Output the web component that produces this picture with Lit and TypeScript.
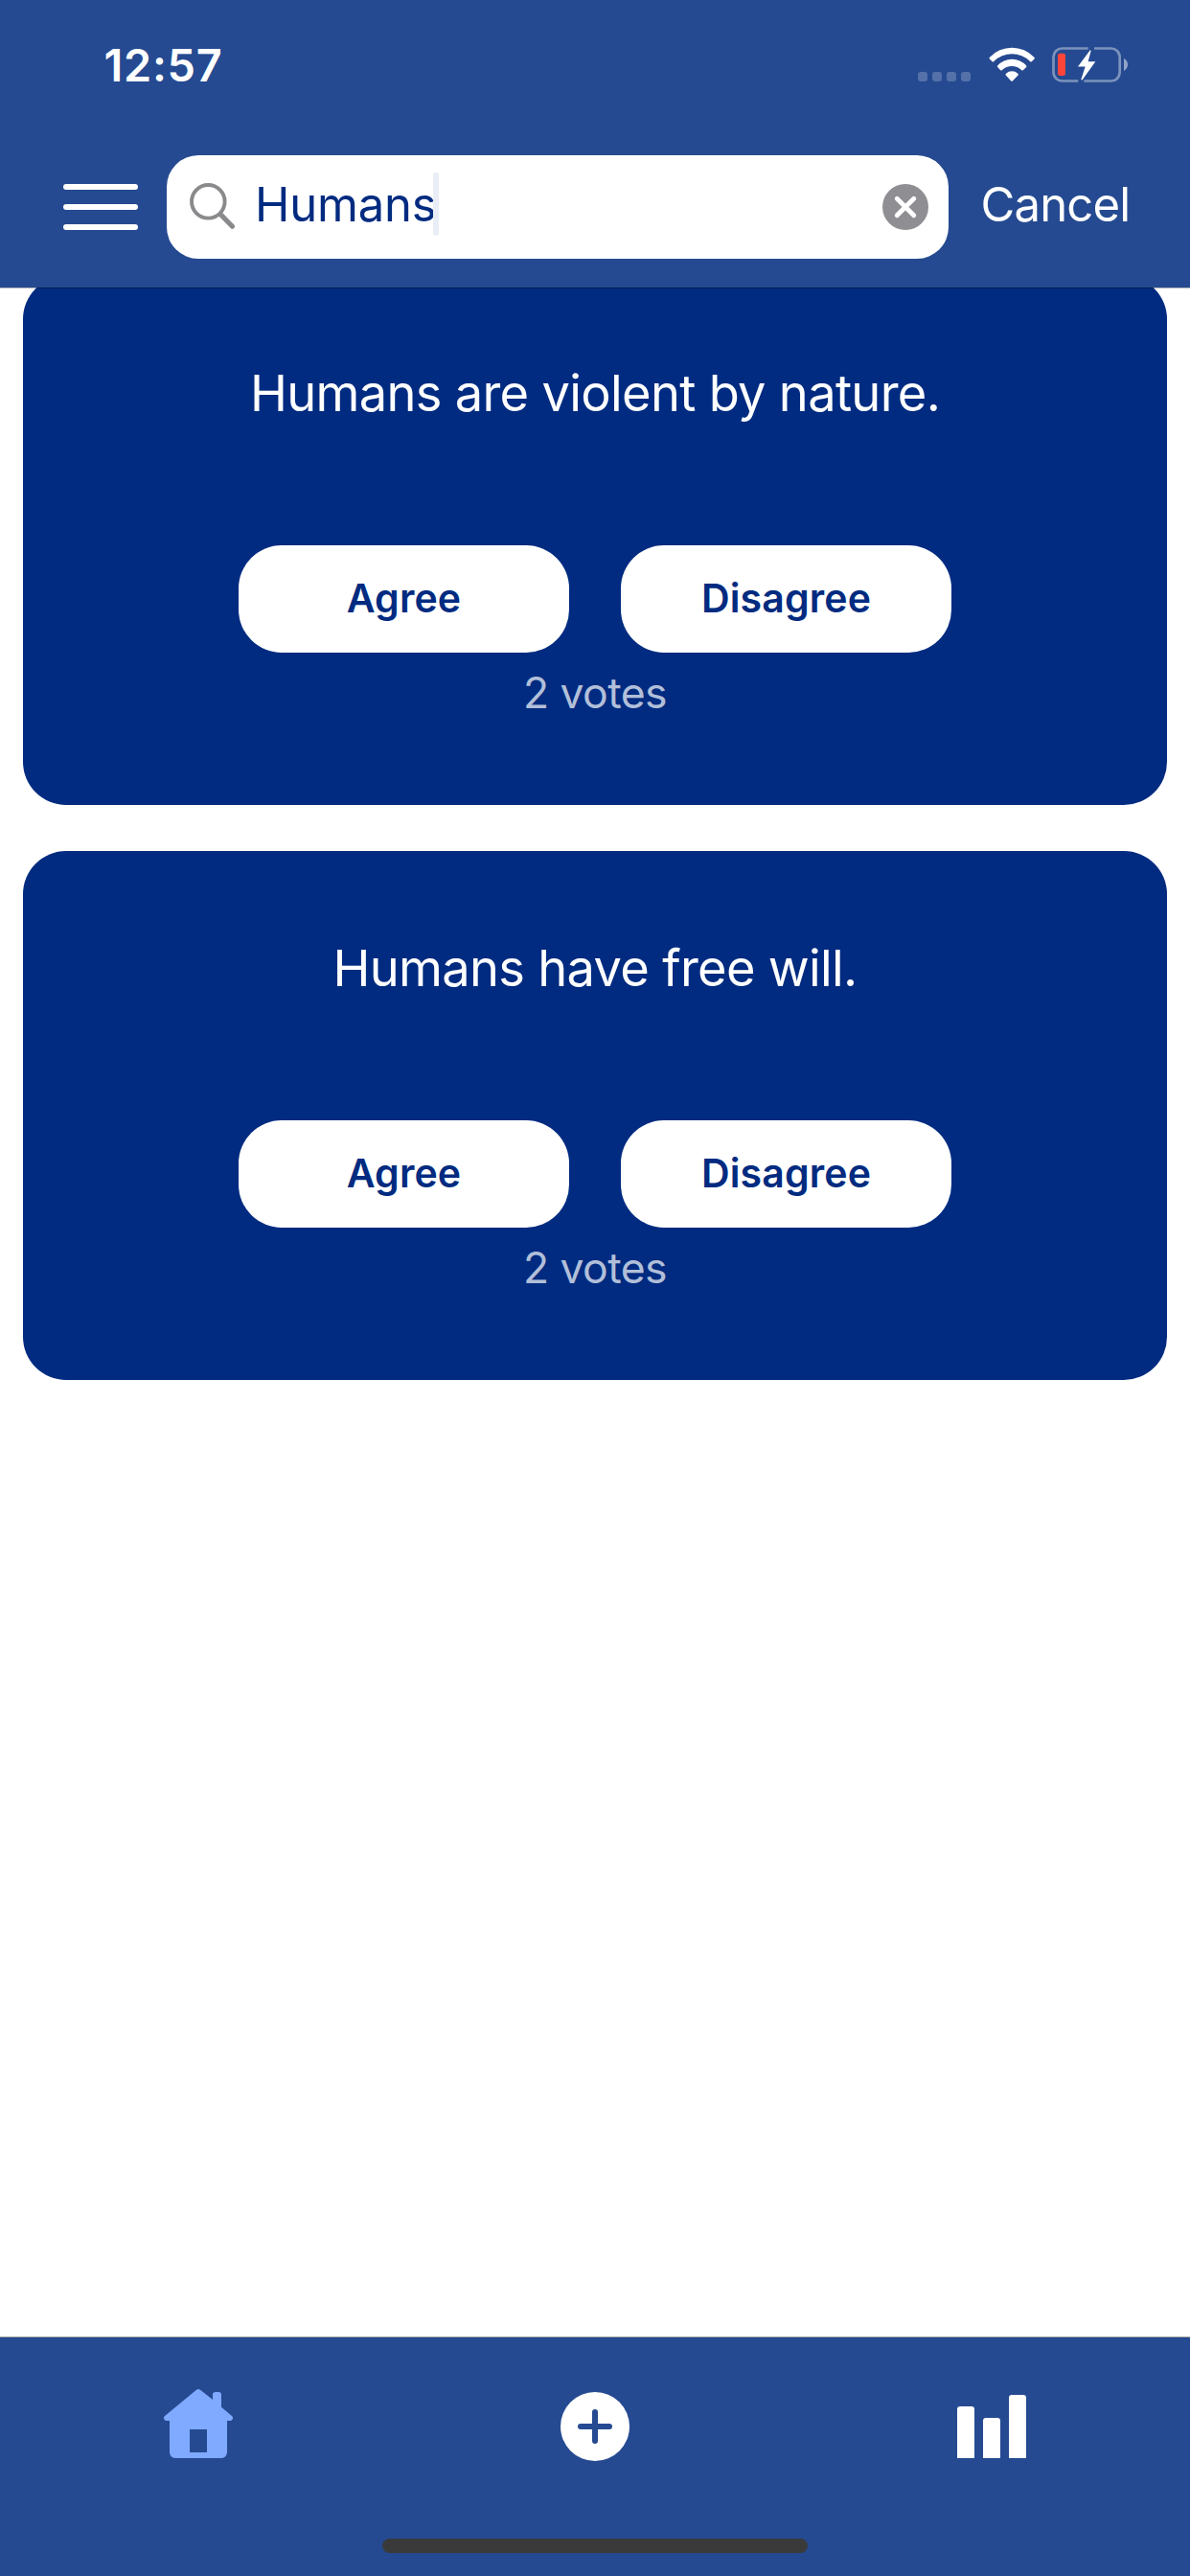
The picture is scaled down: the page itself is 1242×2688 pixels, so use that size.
import { LitElement, html, css } from "lit";
import { customElement, property, state } from "lit/decorators.js";

interface Statement {
  text: string;
  votes: number;
}

@customElement("status-bar")
export class StatusBar extends LitElement {
  static styles = css`
    :host {
      display: flex;
      justify-content: space-between;
      height: 136px;
      padding: 0 65px 0 108.5px;
      box-sizing: border-box;
    }
    .time {
      line-height: 136px;
      font-size: 46.8px;
      font-weight: 600;
      letter-spacing: 0.75px;
    }
    .icons {
      display: flex;
      align-items: flex-start;
      padding-top: 49px;
    }
    .cell {
      display: block;
      width: 55px;
      height: 10px;
      margin: 26px 18.67px 0 0;
    }
    .wifi {
      display: block;
      width: 48px;
      height: 36px;
      margin-right: 18.33px;
    }
    .battery {
      display: block;
      width: 79px;
      height: 37px;
    }
  `;

  render() {
    return html`
      <span class="time">12:57</span>
      <div class="icons">
        <svg class="cell" viewBox="0 0 55 10" fill="#fff" fill-opacity="0.22">
          <rect x="0" width="10" height="10" rx="3" />
          <rect x="15" width="10" height="10" rx="3" />
          <rect x="30" width="10" height="10" rx="3" />
          <rect x="45" width="10" height="10" rx="3" />
        </svg>
        <svg class="wifi" viewBox="574 147 144 108" fill="#fff">
          <path d="M577 179Q574 182 577 185L584 192Q587 195 590 192A81 81 0 0 1 703 192Q706 195 709 192L716 185Q719 182 716 179A96 96 0 0 0 577 179Z" />
          <path d="M602 205Q599 208 602 211L610 219Q613 222 616 219A43 43 0 0 1 676 219Q679 222 682 219L691 211Q694 208 691 205A60 60 0 0 0 602 205Z" />
          <path d="M628 230Q625 233 628 236L643 253Q646 256 649 253L665 236Q668 233 665 230A28 28 0 0 0 628 230Z" />
        </svg>
        <svg class="battery" viewBox="774 147 237 111">
          <g fill="none" stroke="#fff" stroke-opacity="0.4" stroke-width="8">
            <path d="M887 151.500H806A27 27 0 0 0 778.500 178V226A27 27 0 0 0 806 253.500H856" />
            <path d="M906 151.500H958A27 27 0 0 1 986 178V226A27 27 0 0 1 958 253.500H874" />
          </g>
          <path d="M999 182Q1011 190 1011 202T999 222Z" fill="#fff" fill-opacity="0.5" />
          <rect x="792" y="167" width="24" height="70" rx="7" fill="#ff453a" />
          <path d="M893.500 157L855 208.500H878L865 249L868 251L910 192.500H887L896 158Z" fill="#fff" />
        </svg>
      </div>
    `;
  }
}

@customElement("search-bar")
export class SearchBar extends LitElement {
  @property() query = "";

  static styles = css`
    :host {
      display: flex;
      align-items: center;
      height: 108px;
      margin-top: 26px;
      padding-left: 66px;
    }
    .menu {
      display: flex;
      flex-direction: column;
      gap: 15px;
      width: 78px;
      margin-right: 30px;
    }
    .line {
      height: 6px;
      border-radius: 3px;
      background: #fff;
    }
    .field {
      display: flex;
      align-items: center;
      width: 816px;
      height: 108px;
      padding: 0 21px 0 23px;
      box-sizing: border-box;
      border-radius: 33px;
      background: #fff;
      color: #002b80;
    }
    .glass {
      display: block;
      width: 50px;
      height: 50px;
      margin-right: 19px;
    }
    .query,
    .cancel {
      font-size: 49px;
      line-height: 60px;
      padding-bottom: 4px;
    }
    .query {
      letter-spacing: -0.22px;
    }
    .caret {
      width: 6px;
      height: 66px;
      margin: 0 auto 6px -3px;
      border-radius: 3px;
      background: #e9edf5;
    }
    .clear {
      display: block;
      width: 48px;
      height: 48px;
    }
    .cancel {
      margin-left: 33.5px;
      letter-spacing: -0.82px;
    }
  `;

  render() {
    return html`
      <div class="menu">
        <div class="line"></div>
        <div class="line"></div>
        <div class="line"></div>
      </div>
      <div class="field">
        <svg class="glass" viewBox="0 0 50 50" fill="none" stroke="#8a8a8d">
          <circle cx="20.300" cy="19.300" r="17.300" stroke-width="3.900" />
          <path d="M33.500 33L45.500 45.200" stroke-width="5.200" stroke-linecap="round" />
        </svg>
        <span class="query">${this.query}</span>
        <div class="caret"></div>
        <svg class="clear" viewBox="0 0 48 48">
          <circle cx="24" cy="24" r="24" fill="#8e8e93" />
          <path d="M15.200 15.200L32.800 32.800M32.800 15.200L15.200 32.800" stroke="#fff" stroke-width="4.800" stroke-linecap="round" />
        </svg>
      </div>
      <span class="cancel">Cancel</span>
    `;
  }
}

@customElement("statement-card")
export class StatementCard extends LitElement {
  @property() text = "";
  @property({ type: Number }) votes = 0;

  static styles = css`
    :host {
      display: flex;
      flex-direction: column;
      align-items: center;
      height: 552px;
      padding-top: 89px;
      box-sizing: border-box;
      border-radius: 45px;
      background: #002b80;
      color: #fff;
    }
    .title {
      font-size: 52.4px;
      line-height: 66px;
      letter-spacing: -0.68px;
    }
    .actions {
      display: flex;
      gap: 54px;
      margin-top: 126px;
    }
    .choice {
      width: 345px;
      height: 112px;
      border-radius: 45px;
      background: #fff;
      color: #002b80;
      font-size: 41px;
      font-weight: 600;
      line-height: 110px;
      text-align: center;
      letter-spacing: 0.15px;
    }
    .votes {
      margin-top: 15px;
      font-size: 44.5px;
      line-height: 54px;
      letter-spacing: -0.59px;
      color: #b2bfd9;
    }
  `;

  render() {
    return html`
      <div class="title">${this.text}</div>
      <div class="actions">
        <div class="choice">Agree</div>
        <div class="choice">Disagree</div>
      </div>
      <div class="votes">${this.votes} votes</div>
    `;
  }
}

@customElement("tab-bar")
export class TabBar extends LitElement {
  static styles = css`
    :host {
      display: flex;
      flex-direction: column;
      align-items: center;
      justify-content: space-between;
      height: 250px;
      padding: 54px 0 24px;
      box-sizing: border-box;
      border-top: 1px solid #b0aea8;
      background: #254a91;
    }
    .tabs {
      display: grid;
      grid-template-columns: repeat(3, 1fr);
      justify-items: center;
      width: 100%;
    }
    .icon {
      display: block;
      width: 72px;
      height: 75px;
    }
    .home-indicator {
      width: 444px;
      height: 15px;
      border-radius: 7.5px;
      background: #3a3a3a;
    }
  `;

  render() {
    return html`
      <div class="tabs">
        <svg class="icon" viewBox="123 219 216 225" fill="#80aaff">
          <path
            fill-rule="evenodd"
            d="M225 221Q231 217 237 221L276 252V237Q276 228 285 228H294Q303 228 303 237V275L336 303Q340 307 339 311Q337 318 330 318H321V417Q320 434 303 435H159Q142 434 141 417V318H132Q125 318 123 311Q122 306 126 303ZM204 345V417H258V345Z"
          />
        </svg>
        <svg class="icon" viewBox="0 0 72 75">
          <circle cx="36" cy="39" r="36" fill="#fff" />
          <path d="M36 24V54M21 39H51" stroke="#254a91" stroke-width="6" stroke-linecap="round" />
        </svg>
        <svg class="icon" viewBox="0 0 72 75" fill="#fff">
          <path d="M0 72V21Q0 18 3 18H15Q18 18 18 21V72Z" />
          <path d="M27 72V33Q27 30 30 30H42Q45 30 45 33V72Z" />
          <path d="M54 72V9Q54 6 57 6H69Q72 6 72 9V72Z" />
        </svg>
      </div>
      <div class="home-indicator"></div>
    `;
  }
}

@customElement("app-root")
export class AppRoot extends LitElement {
  @state() private query = "Humans";
  @state() private statements: Statement[] = [
    { text: "Humans are violent by nature.", votes: 2 },
    { text: "Humans have free will.", votes: 2 },
  ];

  static styles = css`
    :host {
      display: flex;
      flex-direction: column;
      width: 1242px;
      height: 2688px;
      overflow: hidden;
      background: #fff;
      color: #fff;
      font-family: Inter, "Liberation Sans", sans-serif;
      font-weight: 400;
      white-space: nowrap;
    }
    .header {
      position: relative;
      z-index: 1;
      flex: none;
      height: 300px;
      background: #254a91;
      box-shadow: 0 1px 0 rgba(0, 0, 0, 0.3);
    }
    .feed {
      flex: 1;
      display: flex;
      flex-direction: column;
      gap: 48px;
      min-height: 0;
      margin-top: -12px;
      padding: 0 24px;
      overflow: hidden;
    }
  `;

  render() {
    return html`
      <div class="header">
        <status-bar></status-bar>
        <search-bar .query=${this.query}></search-bar>
      </div>
      <div class="feed">
        ${this.statements.map(
          (s) => html`<statement-card .text=${s.text} .votes=${s.votes}></statement-card>`
        )}
      </div>
      <tab-bar></tab-bar>
    `;
  }
}
